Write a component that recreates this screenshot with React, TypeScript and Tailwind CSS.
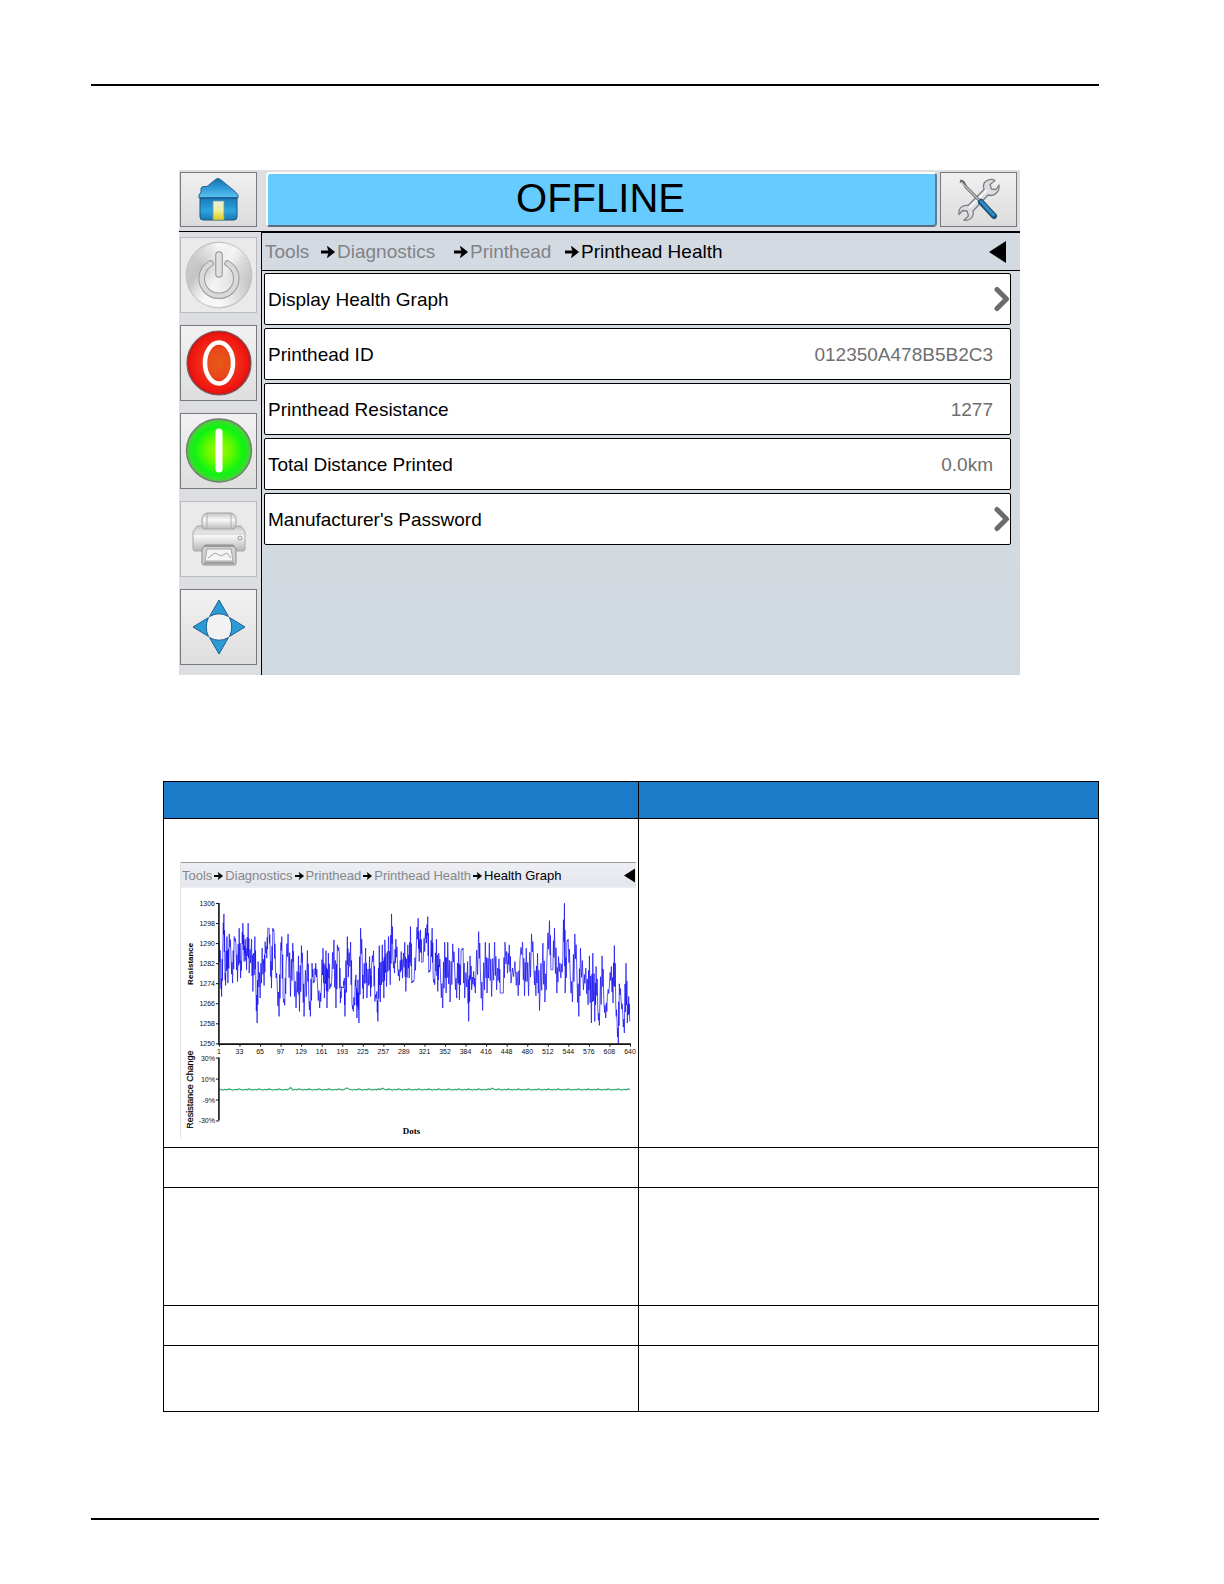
import React from "react";

function Arrow({ className }: { className: string }) {
  return (
    <svg viewBox="0 0 14 12" className={className} aria-hidden="true">
      <path d="M0 6H10" stroke="#000" strokeWidth="3" fill="none" />
      <path d="M6.500 0.500L13.600 6L6.500 11.500L8 6Z" fill="#000" stroke="#000" strokeWidth="0.800" strokeLinejoin="round" />
    </svg>
  );
}

function BackTriangle({ className }: { className: string }) {
  return (
    <svg viewBox="0 0 17 22" className={className} aria-hidden="true">
      <path d="M0 11L17 0V22Z" fill="#000" />
    </svg>
  );
}

function HomeIcon() {
  return (
    <svg viewBox="0 0 44 46" className="h-[46px] w-11" aria-hidden="true">
      <defs>
        <linearGradient id="roof" x1="0" y1="0" x2="0" y2="1">
          <stop offset="0" stopColor="#1b6ea8" />
          <stop offset="0.45" stopColor="#2d98d6" />
          <stop offset="1" stopColor="#5fc3f0" />
        </linearGradient>
        <linearGradient id="wall" x1="0" y1="0" x2="0" y2="1">
          <stop offset="0" stopColor="#1773b4" />
          <stop offset="0.6" stopColor="#2aa5df" />
          <stop offset="1" stopColor="#1a78b6" />
        </linearGradient>
        <linearGradient id="door" x1="0" y1="0" x2="0" y2="1">
          <stop offset="0" stopColor="#e6f2e4" />
          <stop offset="0.5" stopColor="#eeee9c" />
          <stop offset="1" stopColor="#dccb10" />
        </linearGradient>
      </defs>
      <path d="M3 19H40V40Q40 43 37 43H6Q3 43 3 40Z" fill="url(#wall)" stroke="#1d5482" />
      <path d="M4 15V11L6 9.500H10L18.500 2.500Q21 0.500 23.500 2.500L38 14.500L41 18V21H2V18Z" fill="url(#roof)" stroke="#27608e" strokeLinejoin="round" />
      <path d="M3 21H40" stroke="#145d92" strokeWidth="1.500" />
      <rect x="16" y="24" width="11" height="19" fill="url(#door)" stroke="#6f9c9a" strokeWidth="0.800" />
    </svg>
  );
}

function ToolsIcon() {
  return (
    <svg viewBox="0 0 44 44" className="size-11" aria-hidden="true">
      <path
        d="M28.500 3.500C32 1 36 1 38 2.500L33 6.500L34.500 11L39 11.500L42 7C43 12 39.500 17 34 17.500L31 17L16 33C17.500 38.500 12.500 43.500 7 42L11.500 38L10 33L5.500 32.500L2 36.500C1 30.500 5.500 26.500 11 27.500L27 11.500C26 8.500 26.500 5.500 28.500 3.500Z"
        fill="#dcdde0"
        stroke="#7b7e84"
        strokeWidth="1.300"
        strokeLinejoin="round"
      />
      <path d="M12 30L30 12" stroke="#fff" strokeWidth="1.600" />
      <path d="M3 3L6 4L9 9L23 23" stroke="#5f6267" strokeWidth="3" fill="none" strokeLinejoin="round" />
      <path d="M4 4L23 23" stroke="#c3c5c9" strokeWidth="1.200" />
      <path d="M24 24L37 38" stroke="#1b4f78" strokeWidth="6" strokeLinecap="round" />
      <path d="M24 23.500L36.500 37" stroke="#2f8dc4" strokeWidth="3" strokeLinecap="round" />
    </svg>
  );
}

function PowerIcon() {
  return (
    <svg viewBox="0 0 68 68" className="size-[68px]" aria-hidden="true">
      <defs>
        <linearGradient id="silver" x1="0" y1="0.200" x2="1" y2="0.800">
          <stop offset="0" stopColor="#cfcfcf" />
          <stop offset="0.250" stopColor="#c3c4c5" />
          <stop offset="0.500" stopColor="#eeeeee" />
          <stop offset="0.750" stopColor="#d0d1d2" />
          <stop offset="1" stopColor="#b9babc" />
        </linearGradient>
        <radialGradient id="sheen" cx="0.500" cy="1" r="0.600">
          <stop offset="0" stopColor="#fff" stopOpacity="0.900" />
          <stop offset="1" stopColor="#fff" stopOpacity="0" />
        </radialGradient>
        <radialGradient id="sheenTop" cx="0.500" cy="0" r="0.450">
          <stop offset="0" stopColor="#fff" stopOpacity="0.900" />
          <stop offset="1" stopColor="#fff" stopOpacity="0" />
        </radialGradient>
      </defs>
      <circle cx="34" cy="34" r="33" fill="url(#silver)" stroke="#bbbcbe" strokeWidth="0.800" />
      <circle cx="34" cy="34" r="32" fill="url(#sheen)" />
      <circle cx="34" cy="34" r="32" fill="url(#sheenTop)" />
      <path d="M25.500 22.500A17.300 17.300 0 1 0 42.500 22.500" fill="none" stroke="#98999b" strokeWidth="6.500" strokeLinecap="round" />
      <path d="M25.500 22.500A17.300 17.300 0 1 0 42.500 22.500" fill="none" stroke="#d8d9da" strokeWidth="4.500" strokeLinecap="round" />
      <path d="M34 14V33" stroke="#909193" strokeWidth="7.500" strokeLinecap="round" />
      <path d="M34 14V33" stroke="#dfdfe0" strokeWidth="5.500" strokeLinecap="round" />
    </svg>
  );
}

function StopIcon() {
  return (
    <svg viewBox="0 0 68 68" className="size-[68px]" aria-hidden="true">
      <defs>
        <radialGradient id="red" cx="0.500" cy="0.500" r="0.500">
          <stop offset="0" stopColor="#e95a18" />
          <stop offset="0.450" stopColor="#e8481a" />
          <stop offset="0.600" stopColor="#ef2a18" />
          <stop offset="0.900" stopColor="#f0140f" />
          <stop offset="1" stopColor="#b81818" />
        </radialGradient>
      </defs>
      <circle cx="34" cy="34" r="32" fill="url(#red)" stroke="#7b5a60" strokeWidth="1.200" />
      <ellipse cx="34" cy="34" rx="14" ry="20.500" fill="none" stroke="#fff" strokeWidth="4.500" />
    </svg>
  );
}

function StartIcon() {
  return (
    <svg viewBox="0 0 68 68" className="size-[68px]" aria-hidden="true">
      <defs>
        <radialGradient id="green" cx="0.500" cy="0.500" r="0.500">
          <stop offset="0" stopColor="#a4f800" />
          <stop offset="0.400" stopColor="#62f800" />
          <stop offset="0.750" stopColor="#0df510" />
          <stop offset="0.900" stopColor="#33e02a" />
          <stop offset="1" stopColor="#63b64e" />
        </radialGradient>
      </defs>
      <ellipse cx="34" cy="33.500" rx="32.500" ry="31.500" fill="url(#green)" stroke="#6e7f70" strokeWidth="1.400" />
      <path d="M34 15V52" stroke="#fff" strokeWidth="7" strokeLinecap="round" />
    </svg>
  );
}

function PrinterIcon() {
  return (
    <svg viewBox="0 0 54 56" className="h-14 w-[54px]" aria-hidden="true">
      <defs>
        <linearGradient id="body" x1="0" y1="0" x2="0" y2="1">
          <stop offset="0" stopColor="#c3c4c5" />
          <stop offset="0.400" stopColor="#f8f8f8" />
          <stop offset="1" stopColor="#b4b5b6" />
        </linearGradient>
      </defs>
      <rect x="10" y="2" width="34" height="17" rx="6" fill="url(#body)" stroke="#a0a1a3" />
      <path d="M15 3V18M39 3V18" stroke="#adaeb0" />
      <path d="M5 15H10L12 18H42L44 15H49L53 21V38Q53 40 51 40H3Q1 40 1 38V21Z" fill="url(#body)" stroke="#a8a9ab" />
      <path d="M2 23H52" stroke="#d0d1d2" />
      <circle cx="48" cy="27" r="2" fill="#e8e8e8" stroke="#8c8d8f" strokeWidth="0.800" />
      <path d="M13 34H41L44 38V52Q44 54 42 54H12Q10 54 10 52V38Z" fill="#cfd0d1" stroke="#8b8c8e" />
      <path d="M15 38H39L41 50H13Z" fill="#f4f4f4" stroke="#97989a" strokeWidth="0.800" />
      <path d="M16 47L23 42L29 45L35 42L39 47" stroke="#a5a6a8" fill="none" />
      <path d="M12 52H42" stroke="#8f9092" strokeWidth="1.500" />
      <path d="M12 35H42" stroke="#8b8c8e" strokeWidth="1.500" />
    </svg>
  );
}

function MoveIcon() {
  return (
    <svg viewBox="0 0 54 56" className="h-14 w-[54px]" aria-hidden="true">
      <circle cx="27" cy="28" r="14" fill="#f2f2f2" stroke="#d8d8da" strokeWidth="0.600" />
      <g fill="#2b9bd6" stroke="#1f5f92" strokeLinejoin="round">
        <path d="M27 1L36.500 17.500Q27 12 17.500 17.500Z" />
        <path d="M27 55L36.500 38.500Q27 44 17.500 38.500Z" />
        <path d="M1 28L16.500 18.500Q12 28 16.500 37.500Z" />
        <path d="M53 28L37.500 18.500Q42 28 37.500 37.500Z" />
      </g>
    </svg>
  );
}

function Chevron() {
  return (
    <svg viewBox="0 0 16 26" className="h-[26px] w-4" aria-hidden="true">
      <path d="M3 3.500L12.500 13L3 22.500" fill="none" stroke="#6b6b6b" strokeWidth="5" strokeLinecap="round" strokeLinejoin="round" />
    </svg>
  );
}

const sideButtons = [
  { label: "Power", icon: <PowerIcon />, muted: true },
  { label: "Stop", icon: <StopIcon />, muted: false },
  { label: "Start", icon: <StartIcon />, muted: false },
  { label: "Print", icon: <PrinterIcon />, muted: true },
  { label: "Move", icon: <MoveIcon />, muted: false },
];

const rows = [
  { label: "Display Health Graph", value: "" },
  { label: "Printhead ID", value: "012350A478B5B2C3" },
  { label: "Printhead Resistance", value: "1277" },
  { label: "Total Distance Printed", value: "0.0km" },
  { label: "Manufacturer's Password", value: "" },
];

// Turning points of the resistance trace, in thirds of a chart unit.
const trace: number[] = [
  25,155,29,243,32,320,36,160,39,72,42,235,44,287,48,140,51,280,55,132,60,190,65,280,70,140,75,160,80,275,85,115,89,265,93,190,96,100,100,215,103,148,107,240,112,100,115,250,122,148,126,305,132,140,135,280,139,400,142,215,148,325,154,175,160,287,163,155,168,205,171,115,175,115,178,180,182,295,186,115,190,128,194,240,199,275,205,380,209,200,213,140,217,320,222,347,226,230,232,132,239,320,246,160,249,240,256,355,263,198,266,365,272,167,276,240,280,380,290,182,294,315,299,380,304,220,308,280,312,270,315,220,320,280,327,355,332,290,337,175,341,325,346,182,349,355,353,190,357,298,363,275,370,150,376,355,380,165,386,190,389,340,393,290,398,295,401,265,403,380,410,140,413,262,420,157,424,340,428,365,433,305,436,255,439,385,442,270,445,400,450,115,455,225,458,327,465,175,469,325,477,200,480,320,483,230,489,183,493,335,499,305,502,395,506,167,509,337,515,165,520,325,523,150,528,290,534,140,539,285,543,72,547,200,552,250,556,148,561,225,567,273,572,185,576,265,583,157,586,305,592,165,596,265,600,110,604,280,611,270,617,175,623,85,626,215,
  630,120,634,218,638,215,645,115,648,160,652,80,655,248,660,238,665,115,668,262,673,285,678,148,682,305,685,190,690,250,697,355,703,157,707,310,712,157,719,337,727,162,733,240,739,325,745,175,747,330,752,182,758,175,763,325,772,215,775,395,779,198,784,300,790,245,795,310,805,125,810,240,817,362,825,157,830,310,837,160,844,320,853,157,859,300,866,207,870,310,879,310,884,157,892,250,897,165,902,280,914,215,924,318,929,210,937,157,943,318,948,175,955,318,964,132,970,210,977,318,982,190,988,362,998,160,1004,337,1010,215,1018,92,1022,240,1028,240,1033,115,1040,310,1045,200,1052,265,1058,205,1063,40,1065,310,1070,157,1074,148,1080,248,1087,337,1094,132,1100,240,1106,380,1111,175,1120,300,1127,235,1134,345,1138,198,1144,400,1148,190,1154,395,1158,230,1163,355,1168,407,1176,198,1181,330,1187,385,1192,320,1198,290,1204,230,1209,340,1213,167,1217,345,1221,395,1225,462,1228,282,1233,330,1238,370,1243,430,1248,220,1252,400,1256,320,1259,395,
];

// Short back-swings between turning points: share of the span, share of the rise.
const swings = [
  [0.4, 0.7],
  [0.65, 0.3],
];

function tracePath() {
  const out: string[] = [];
  for (let i = 0; i < trace.length; i += 2) {
    const x = trace[i];
    const y = trace[i + 1];
    out.push(`${(x / 3 + 30).toFixed(1)} ${(y / 3 + 2).toFixed(1)}`);
    if (i + 2 < trace.length) {
      const dx = trace[i + 2] - x;
      const dy = trace[i + 3] - y;
      for (const [a, b] of swings) {
        out.push(`${((x + dx * a) / 3 + 30).toFixed(1)} ${((y + dy * b) / 3 + 2).toFixed(1)}`);
      }
    }
  }
  return "M" + out.join("L");
}

function changePath() {
  const out: string[] = [];
  for (let i = 0; i <= 206; i++) {
    const spike = i === 36 || i === 64 || i === 82 || i === 137 ? -2 : 0;
    const y = 202 + (((i * 7) % 5) - 2) * 0.3 + spike;
    out.push(`${38 + i * 2} ${y.toFixed(1)}`);
  }
  return "M" + out.join("L");
}

const xLabels = [1, 33, 65, 97, 129, 161, 193, 225, 257, 289, 321, 352, 384, 416, 448, 480, 512, 544, 576, 608, 640];
const yLabels = [1306, 1298, 1290, 1282, 1274, 1266, 1258, 1250];
const changeLabels = ["30%", "10%", "-9%", "-30%"];

function HealthGraph() {
  return (
    <svg
      viewBox="0 0 456 252"
      className="block w-full [font-family:'Liberation_Sans',Arial,sans-serif]"
      role="img"
      aria-label="Resistance and resistance change by dot"
    >
      <path d={tracePath()} fill="none" stroke="#1008f0" strokeWidth="0.700" strokeLinejoin="bevel" />
      <path d={changePath()} fill="none" stroke="#2aa56c" strokeWidth="1.100" />
      <g stroke="#111" strokeWidth="1.600" fill="none">
        <path d="M38 15V156.500H451" />
        <path d="M38 170V233" />
      </g>
      <g fontSize="7" fill="#111" textAnchor="end">
        {yLabels.map((v, i) => (
          <g key={v}>
            <path d={`M35 ${15.5 + i * 20.1}H38`} stroke="#111" />
            <text x="34" y={18 + i * 20.1}>{v}</text>
          </g>
        ))}
        {changeLabels.map((v, i) => (
          <g key={v}>
            <path d={`M35 ${170.5 + i * 21}H38`} stroke="#111" />
            <text x="34" y={173 + i * 21}>{v}</text>
          </g>
        ))}
      </g>
      <g fontSize="7" fill="#111" textAnchor="middle">
        {xLabels.map((v, i) => (
          <g key={v}>
            <path d={`M${38.5 + i * 20.6} 157V159`} stroke="#111" />
            <text x={38 + i * 20.6} y="166">{v}</text>
          </g>
        ))}
      </g>
      <g fontSize="8" fontWeight="bold" fill="#000" textAnchor="middle">
        <text transform="translate(12 76) rotate(-90)">Resistance</text>
        <text transform="translate(12 202) rotate(-90)" fontSize="9" fontWeight="normal" stroke="#000" strokeWidth="0.200">Resistance Change</text>
        <text x="231" y="247" fontSize="9" fontFamily="'Liberation Serif', serif">Dots</text>
      </g>
    </svg>
  );
}

function DevicePanel() {
  return (
    <section className="ml-[88px] mr-[79px] flex flex-col bg-[#dcdee2] [font-family:'Liberation_Sans',Arial,sans-serif]">
      <header className="flex h-[61px] gap-[3px] py-0.5 pl-px pr-[3px] pb-1">
        <button aria-label="Home" className="flex w-[77px] shrink-0 items-center justify-center border border-[#77797d] bg-linear-to-b from-[#f0f0f0] to-[#dcdcdd]">
          <HomeIcon />
        </button>
        <h1 className="ml-[6px] flex grow items-center justify-center rounded-sm border-2 border-t-white border-l-white border-r-[#5a7f95] border-b-[#5a6c78] bg-[#66ccff] pb-1 pr-0.5 text-[40px] leading-none text-black">
          OFFLINE
        </h1>
        <button aria-label="Tools" className="flex w-[77px] shrink-0 items-center justify-center border border-[#77797d] bg-linear-to-b from-[#f0f0f0] to-[#dcdcdd]">
          <ToolsIcon />
        </button>
      </header>
      <div className="flex border-t border-black">
        <aside className="flex w-[82px] shrink-0 flex-col gap-3 pb-[10px] pl-px pr-1 pt-[5px]">
          {sideButtons.map((b) => (
            <button
              key={b.label}
              aria-label={b.label}
              className={
                b.muted
                  ? "flex h-[76px] items-center justify-center border border-[#b9bbbe] bg-[#eaeaeb]"
                  : "flex h-[76px] items-center justify-center border border-[#77797d] bg-linear-to-b from-[#f2f2f2] to-[#dededf]"
              }
            >
              {b.icon}
            </button>
          ))}
        </aside>
        <main className="flex grow flex-col border-l border-t border-black bg-linear-to-b from-[#d8dbe0] to-[#d0d9e0]">
          <nav aria-label="Breadcrumb" className="flex h-[38px] items-center border-b border-black bg-[#d4dae2] pl-[3px] pr-[14px] text-[19px] text-[#808387]">
            <a href="#tools" className="w-[56px] pt-0.5">Tools</a>
            <Arrow className="mr-0.5 h-3 w-[14px]" />
            <a href="#diagnostics" className="w-[117px] pt-0.5">Diagnostics</a>
            <Arrow className="mr-0.5 h-3 w-[14px]" />
            <a href="#printhead" className="w-[95px] pt-0.5">Printhead</a>
            <Arrow className="mr-0.5 h-3 w-[14px]" />
            <span className="pt-0.5 text-black">Printhead Health</span>
            <button aria-label="Back" className="ml-auto">
              <BackTriangle className="h-[22px] w-[17px]" />
            </button>
          </nav>
          <div className="flex flex-col gap-[3px] pl-0.5 pr-[9px] pt-0.5">
            {rows.map((r) => (
              <button
                key={r.label}
                className="flex h-[52px] items-center justify-between rounded-xs border border-black bg-white pl-[3px] text-[19px] text-black"
              >
                <span className="pt-[3px]">{r.label}</span>
                {r.value ? <span className="pr-[17px] pt-[3px] text-[#6e6e6e]">{r.value}</span> : <Chevron />}
              </button>
            ))}
          </div>
        </main>
      </div>
    </section>
  );
}

function GraphPanel() {
  return (
    <div className="border-l border-[#e4e4e8] [font-family:'Liberation_Sans',Arial,sans-serif]">
      <nav aria-label="Graph breadcrumb" className="flex h-[26px] items-center gap-0.5 border-b-2 border-t border-b-[#ececf2] border-t-[#96989c] bg-linear-to-b from-[#eeeff4] to-[#e4e6ee] pl-px pr-px pt-0.5 text-[13px] text-[#85878b]">
        <a href="#tools">Tools</a>
        <Arrow className="h-2 w-[9px]" />
        <a href="#diagnostics">Diagnostics</a>
        <Arrow className="h-2 w-[9px]" />
        <a href="#printhead">Printhead</a>
        <Arrow className="h-2 w-[9px]" />
        <a href="#health">Printhead Health</a>
        <Arrow className="h-2 w-[9px]" />
        <span className="text-black">Health Graph</span>
        <button aria-label="Back" className="ml-auto">
          <BackTriangle className="h-[15px] w-[11px]" />
        </button>
      </nav>
      <HealthGraph />
    </div>
  );
}

export default function App() {
  return (
    <div className="min-h-screen bg-white pl-[91px] pr-[125px] pt-[84px] text-black">
      <hr className="border-t-2 border-black" />
      <div className="pt-[84px]">
        <DevicePanel />
      </div>
      <div className="pl-[72px] pt-[106px]">
        <table className="w-full table-fixed border-collapse border border-black">
          <colgroup>
            <col className="w-[475px]" />
            <col />
          </colgroup>
          <thead>
            <tr className="h-[37px] bg-[#1b7bc8]">
              <th className="border border-black" />
              <th className="border border-black" />
            </tr>
          </thead>
          <tbody>
            <tr className="h-[329px]">
              <td className="border border-black pl-4 pr-0.5 pt-[43px] align-top">
                <GraphPanel />
              </td>
              <td className="border border-black" />
            </tr>
            <tr className="h-10">
              <td className="border border-black" />
              <td className="border border-black" />
            </tr>
            <tr className="h-[118px]">
              <td className="border border-black" />
              <td className="border border-black" />
            </tr>
            <tr className="h-10">
              <td className="border border-black" />
              <td className="border border-black" />
            </tr>
            <tr className="h-[66px]">
              <td className="border border-black" />
              <td className="border border-black" />
            </tr>
          </tbody>
        </table>
      </div>
      <hr className="mt-[106px] border-t-2 border-black" />
    </div>
  );
}
